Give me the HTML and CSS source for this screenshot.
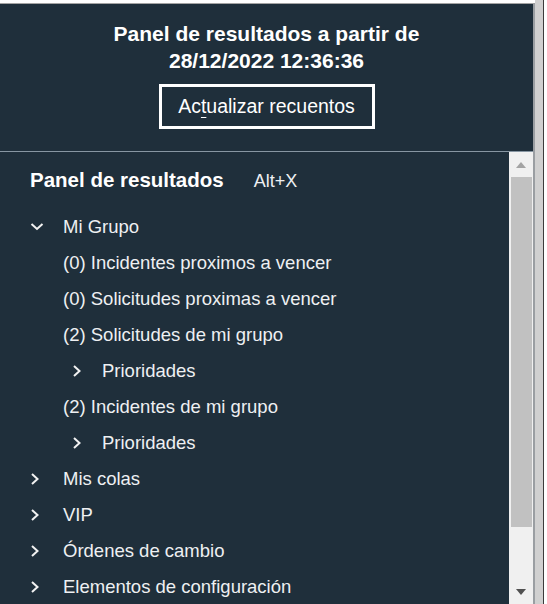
FILE: index.html
```html
<!DOCTYPE html>
<html lang="es">
<head>
<meta charset="utf-8">
<title>Panel de resultados</title>
<link rel="stylesheet" href="styles.css">
</head>
<body>
<div class="window">
  <div class="panel">
    <header class="head">
      <h1 class="title">Panel de resultados a partir de<br>28/12/2022 12:36:36</h1>
      <button class="refresh" type="button">Ac<u>t</u>ualizar recuentos</button>
    </header>
    <div class="body">
      <div class="content">
        <div class="heading">
          <span class="heading-text">Panel de resultados</span>
          <span class="shortcut">Alt+X</span>
        </div>
        <ul class="tree">
          <li class="row lvl1"><svg class="chev down" width="14" height="10" viewBox="0 0 14 10"><path d="M1.5 2 L7 7 L12.5 2" fill="none" stroke="#f2f2f2" stroke-width="2"/></svg><span>Mi Grupo</span></li>
          <li class="row lvl2"><span>(0) Incidentes proximos a vencer</span></li>
          <li class="row lvl2"><span>(0) Solicitudes proximas a vencer</span></li>
          <li class="row lvl2"><span>(2) Solicitudes de mi grupo</span></li>
          <li class="row lvl3"><svg class="chev right" width="10" height="12" viewBox="0 0 10 12"><path d="M2 1 L7.5 6 L2 11" fill="none" stroke="#f2f2f2" stroke-width="2"/></svg><span>Prioridades</span></li>
          <li class="row lvl2"><span>(2) Incidentes de mi grupo</span></li>
          <li class="row lvl3"><svg class="chev right" width="10" height="12" viewBox="0 0 10 12"><path d="M2 1 L7.5 6 L2 11" fill="none" stroke="#f2f2f2" stroke-width="2"/></svg><span>Prioridades</span></li>
          <li class="row lvl1"><svg class="chev right" width="10" height="12" viewBox="0 0 10 12"><path d="M2 1 L7.5 6 L2 11" fill="none" stroke="#f2f2f2" stroke-width="2"/></svg><span>Mis colas</span></li>
          <li class="row lvl1"><svg class="chev right" width="10" height="12" viewBox="0 0 10 12"><path d="M2 1 L7.5 6 L2 11" fill="none" stroke="#f2f2f2" stroke-width="2"/></svg><span>VIP</span></li>
          <li class="row lvl1"><svg class="chev right" width="10" height="12" viewBox="0 0 10 12"><path d="M2 1 L7.5 6 L2 11" fill="none" stroke="#f2f2f2" stroke-width="2"/></svg><span>Órdenes de cambio</span></li>
          <li class="row lvl1"><svg class="chev right" width="10" height="12" viewBox="0 0 10 12"><path d="M2 1 L7.5 6 L2 11" fill="none" stroke="#f2f2f2" stroke-width="2"/></svg><span>Elementos de configuración</span></li>
        </ul>
      </div>
      <div class="scrollbar">
        <div class="arrow up"></div>
        <div class="track"><div class="thumb"></div></div>
        <div class="arrow down"></div>
      </div>
    </div>
  </div>
  <div class="edge"></div>
</div>
</body>
</html>
```

FILE: styles.css
```css
html, body {
  margin: 0;
  padding: 0;
  background: #ffffff;
  height: 100%;
  overflow: hidden;
}
body {
  font-family: "Liberation Sans", Arial, sans-serif;
  color: #eef0f2;
}
.window {
  display: flex;
  height: 604px;
  padding-top: 3px;
  box-sizing: border-box;
}
.panel {
  width: 533px;
  background: #1f2f3b;
  border-top: 1px solid #a3a3a3;
  border-right: 2px solid #9a9ea2;
  display: flex;
  flex-direction: column;
  overflow: hidden;
}
.edge {
  width: 8px;
  background: #d0d0d0;
  border-right: 1px solid #3c3c3c;
  margin-top: -3px;
}
.head {
  height: 147px;
  border-bottom: 1px solid #8796a2;
  display: flex;
  flex-direction: column;
  align-items: center;
  flex-shrink: 0;
}
.title {
  margin: 16px 0 0;
  font-size: 21px;
  line-height: 27px;
  font-weight: bold;
  text-align: center;
  color: #ffffff;
}
.refresh {
  margin-top: 10px;
  width: 216px;
  height: 45px;
  background: transparent;
  border: 3px solid #ffffff;
  color: #ffffff;
  font-family: inherit;
  font-size: 19.5px;
  padding: 0;
}
.refresh u {
  text-underline-offset: 4px;
}
.body {
  flex: 1;
  display: flex;
  min-height: 0;
}
.content {
  flex: 1;
  padding: 16px 0 0 30px;
  overflow: hidden;
}
.heading {
  display: flex;
  align-items: baseline;
  height: 24px;
  line-height: 24px;
}
.heading-text {
  font-size: 20.5px;
  font-weight: bold;
  color: #ffffff;
}
.shortcut {
  margin-left: 30px;
  font-size: 18px;
}
.tree {
  list-style: none;
  margin: 17px 0 0;
  padding: 0;
}
.row {
  height: 36px;
  display: flex;
  align-items: center;
  font-size: 18.5px;
  white-space: nowrap;
}
.chev {
  flex-shrink: 0;
}
.lvl1 .down {
  margin-right: 19px;
}
.lvl1 .right {
  margin-right: 23px;
}
.lvl2 {
  padding-left: 33px;
}
.lvl3 {
  padding-left: 42px;
}
.lvl3 .right {
  margin-right: 20px;
}
.scrollbar {
  width: 24px;
  background: #f0f0f0;
  display: flex;
  flex-direction: column;
  flex-shrink: 0;
}
.arrow {
  height: 25px;
  display: flex;
  align-items: center;
  justify-content: center;
  flex-shrink: 0;
}
.arrow::before {
  content: "";
  width: 0;
  height: 0;
  border-left: 5px solid transparent;
  border-right: 5px solid transparent;
}
.up::before {
  border-bottom: 6px solid #a3a3a3;
}
.down::before {
  border-top: 6px solid #505050;
}
.track {
  flex: 1;
  padding: 0 1px 0 2px;
}
.thumb {
  height: 350px;
  background: #c1c1c1;
}
```
